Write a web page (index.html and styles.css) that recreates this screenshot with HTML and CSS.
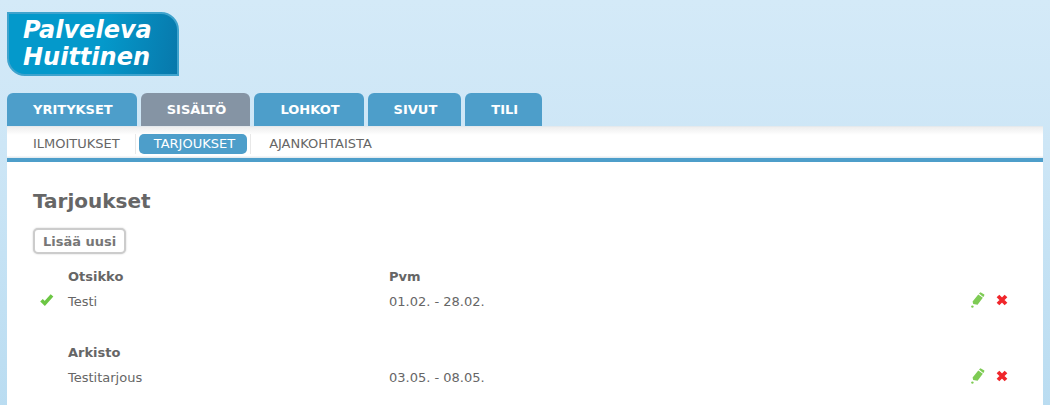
FILE: index.html
```html
<!DOCTYPE html>
<html lang="fi">
<head>
  <meta charset="UTF-8" />
  <title>Palveleva Huittinen - Tarjoukset</title>
  <link rel="stylesheet" href="styles.css">
</head>
<body>
  <svg width="0" height="0" class="icons" aria-hidden="true">
    <symbol id="check" viewBox="0 0 14 14">
      <path d="M1.5 7.2 L4.8 10.5 L12 2.4" fill="none" stroke="#6cc644" stroke-width="3.6"/>
    </symbol>
    <symbol id="pencil" viewBox="0 0 16 18">
      <g fill="#7ecb54">
        <path d="M9 2.6 L10.4 1.2 L14.4 3.4 L14 5.2 L13.2 6 Z"/>
        <path d="M8.3 3.4 L12.8 6.8 L7.6 13.8 L3.2 13 L2.6 10.4 Z"/>
        <circle cx="2.4" cy="15.6" r="1.2"/>
      </g>
    </symbol>
    <symbol id="cross" viewBox="0 0 12 12">
      <path d="M2 2 L10 10 M10 2 L2 10" fill="none" stroke="#f0262b" stroke-width="3.8"/>
    </symbol>
  </svg>

  <header>
    <a href="#" class="logo"><span>Palveleva</span><span>Huittinen</span></a>
    <nav class="tabs">
      <a href="#">YRITYKSET</a>
      <a href="#" class="active">SISÄLTÖ</a>
      <a href="#">LOHKOT</a>
      <a href="#">SIVUT</a>
      <a href="#">TILI</a>
    </nav>
  </header>

  <nav>
    <ul class="submenu">
      <li><a href="#">ILMOITUKSET</a></li>
      <li><a href="#" class="active">TARJOUKSET</a></li>
      <li><a href="#">AJANKOHTAISTA</a></li>
    </ul>
  </nav>

  <main>
    <h1>Tarjoukset</h1>
    <button type="button" class="add">Lisää uusi</button>
    <table>
      <thead>
        <tr><th class="state"></th><th class="title">Otsikko</th><th>Pvm</th><th class="tools"></th></tr>
      </thead>
      <tbody>
        <tr>
          <td class="state"><svg width="14" height="14"><use href="#check"/></svg></td>
          <td>Testi</td>
          <td>01.02. - 28.02.</td>
          <td class="tools">
            <div>
              <a href="#" aria-label="Muokkaa"><svg width="16" height="18"><use href="#pencil"/></svg></a>
              <a href="#" aria-label="Poista"><svg width="12" height="12"><use href="#cross"/></svg></a>
            </div>
          </td>
        </tr>
      </tbody>
      <tbody class="archive">
        <tr><th></th><th>Arkisto</th><th></th><th></th></tr>
        <tr>
          <td></td>
          <td>Testitarjous</td>
          <td>03.05. - 08.05.</td>
          <td class="tools">
            <div>
              <a href="#" aria-label="Muokkaa"><svg width="16" height="18"><use href="#pencil"/></svg></a>
              <a href="#" aria-label="Poista"><svg width="12" height="12"><use href="#cross"/></svg></a>
            </div>
          </td>
        </tr>
      </tbody>
    </table>
  </main>
</body>
</html>
```
FILE: styles.css
```css
* {
  box-sizing: border-box;
}
body {
  display: flex;
  flex-direction: column;
  min-height: 100vh;
  margin: 0;
  padding: 12px 7px 0;
  background: linear-gradient(#d4eaf8, #cde6f6 35%, #b9dcf1);
  color: #666;
  font-family: "DejaVu Sans", Verdana, sans-serif;
  font-size: 13px;
}
a {
  color: inherit;
  text-decoration: none;
}
.icons {
  position: absolute;
}
.logo {
  display: flex;
  flex-direction: column;
  width: 172px;
  height: 64px;
  padding: 3px 0 0 14px;
  border: 2px solid #3fa3cd;
  border-radius: 0 18px 0 18px;
  background: linear-gradient(100deg, #0499cb 55%, #0878ab);
  color: #fff;
  font: italic bold 24px/27px "DejaVu Sans", sans-serif;
}
.tabs {
  display: flex;
  gap: 4px;
  margin-top: 17px;
}
.tabs a {
  padding: 0 24px 0 26px;
  border-radius: 6px 6px 0 0;
  background: #4d9eca;
  color: #fff;
  font-weight: bold;
  line-height: 33px;
}
.tabs a.active {
  background: #8594a4;
}
.submenu {
  display: flex;
  align-items: center;
  height: 36px;
  margin: 0;
  padding: 3px 11px 0;
  border-top: 1px solid #e4e9ed;
  border-bottom: 4px solid #4d9eca;
  background: linear-gradient(#eee, #fff 8px, #fff 29px, #e6ecf0 30px);
  list-style: none;
}
.submenu li {
  padding-right: 3px;
}
.submenu li + li {
  padding-left: 3px;
  border-left: 1px solid #e8e8e8;
}
.submenu a {
  display: block;
  padding: 0 12px 0 15px;
  border-radius: 5px;
  line-height: 20px;
}
.submenu a.active {
  background: #4d9eca;
  color: #fff;
}
main {
  flex: 1;
  padding: 26px;
  background: #fff;
}
h1 {
  margin: 0;
  font-size: 20px;
  line-height: 26px;
}
.add {
  height: 26px;
  margin: 14px 0 10px;
  padding: 0 8px;
  border: 2px solid #ccc;
  border-radius: 5px;
  box-shadow: 0 0 2px #ccc;
  background: #fff;
  color: #777;
  font: bold 13px "DejaVu Sans", Verdana, sans-serif;
}
table {
  width: 100%;
  border-collapse: collapse;
}
th,
td {
  height: 25px;
  padding: 0;
  text-align: left;
}
.state {
  width: 35px;
  padding: 0 0 4px 7px;
}
.title {
  width: 321px;
}
.archive::before {
  content: "";
  display: block;
  height: 26px;
}
.tools div {
  display: flex;
  justify-content: flex-end;
  align-items: center;
  gap: 10px;
  padding: 0 9px 4px 0;
}
.tools svg,
.state svg {
  display: block;
}
```
